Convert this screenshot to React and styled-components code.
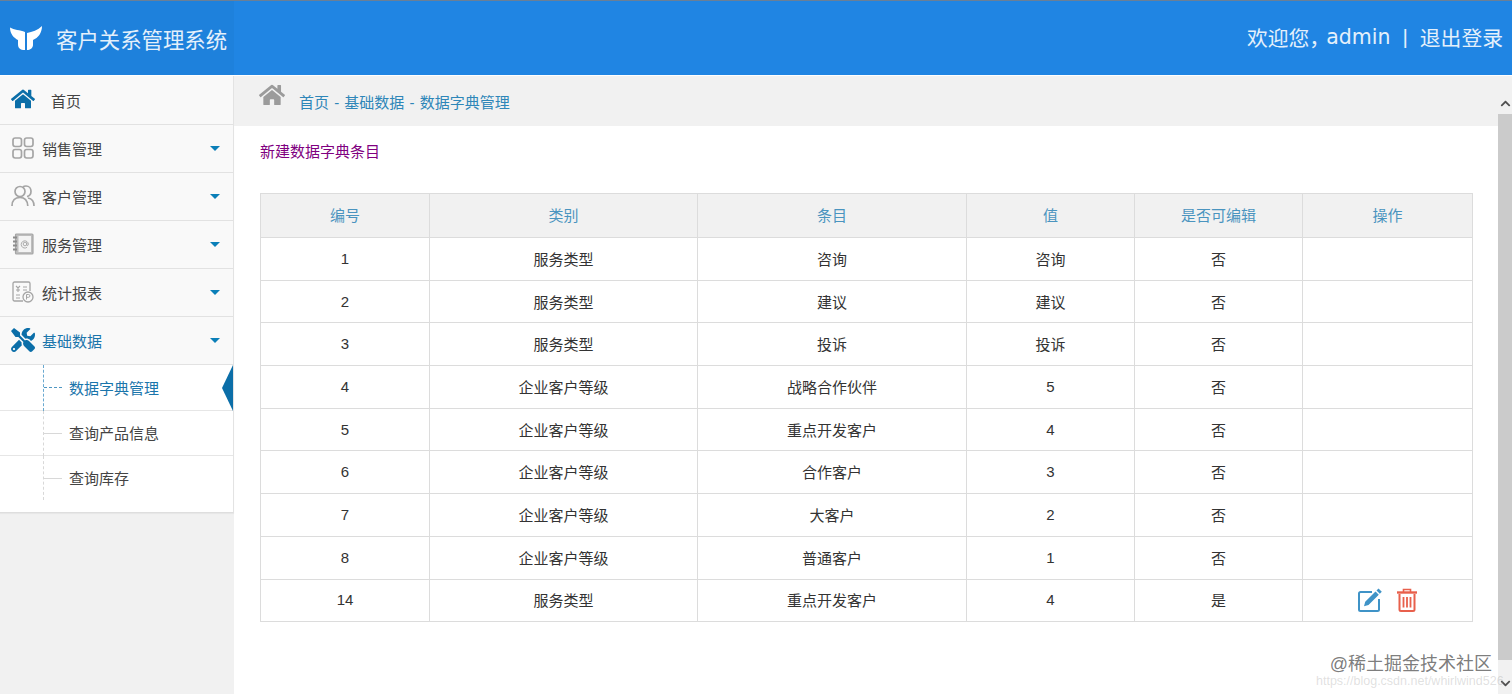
import React from 'react';
import styled, { createGlobalStyle } from 'styled-components';
import { FaHome, FaTools, FaChevronUp, FaChevronDown } from 'react-icons/fa';

const GlobalStyle = createGlobalStyle`
  html, body {
    margin: 0;
    padding: 0;
    height: 100%;
    overflow: hidden;
    font-family: "Liberation Sans", "Noto Sans CJK SC", sans-serif;
    font-size: 15px;
    color: #333;
  }
`;

const Page = styled.div`
  position: relative;
  width: 1512px;
  height: 694px;
  overflow: hidden;
  background: #fff;
  display: flex;
  flex-direction: column;
`;

const Header = styled.header`
  height: 74px;
  flex: none;
  display: flex;
  align-items: center;
  justify-content: space-between;
  background: #2085e3;
  border-top: 1px solid #6a7f96;
  color: #e4f0fb;
`;

const Brand = styled.div`
  width: 234px;
  height: 100%;
  display: flex;
  align-items: center;
  gap: 14px;
  padding: 0 0 0 10px;
  box-sizing: border-box;
  background: #1e81dc;
  font-size: 21.4px;
  white-space: nowrap;
`;

const UserBar = styled.div`
  display: flex;
  align-items: center;
  padding: 0 9px 2px 0;
  font-size: 20.8px;
`;

const UserName = styled.span`
  font-family: "DejaVu Sans", sans-serif;
  font-size: 20.5px;
  margin: 0 12px 0 -4px;
`;

const Divider = styled.span`
  margin-right: 12px;
`;

const Body = styled.div`
  flex: 1;
  min-height: 0;
  margin-top: 1px;
  display: flex;
`;

const Sidebar = styled.aside`
  width: 234px;
  flex: none;
  background: #f1f1f1;
`;

const MenuList = styled.div`
  background: #fff;
  border-right: 1px solid #e3e3e3;
  border-bottom: 1px solid #dedede;
  box-shadow: 0 1px 1px rgba(0, 0, 0, 0.04);
`;

const MenuRow = styled.div`
  height: ${({ $home }) => ($home ? '49px' : '48px')};
  box-sizing: border-box;
  display: flex;
  align-items: center;
  background: #f9f9f9;
  border-bottom: 1px solid #e2e2e2;
  padding: 0 13px 0 11px;
  color: ${({ $active }) => ($active ? '#1a75ab' : '#444')};
`;

const MenuIcon = styled.span`
  width: 24px;
  height: 24px;
  flex: none;
  display: flex;
  align-items: center;
  justify-content: center;
  margin: 0 ${({ $home }) => ($home ? '16px' : '7px')} 2px 0;
  color: ${({ $active }) => ($active ? '#0b6ea8' : '#a5a5a5')};
`;

const MenuLabel = styled.span`
  flex: 1;
`;

const Caret = styled.span`
  width: 0;
  height: 0;
  border-left: 5.5px solid transparent;
  border-right: 5.5px solid transparent;
  border-top: 5px solid #0b7fb8;
`;

const SubRow = styled.div`
  position: relative;
  height: ${({ $height }) => $height}px;
  box-sizing: border-box;
  padding: 0 0 ${({ $lift }) => $lift}px 69px;
  display: flex;
  align-items: center;
  background: #fff;
  border-bottom: ${({ $last }) => ($last ? 'none' : '1px solid #e6e6e6')};
  color: ${({ $active }) => ($active ? '#1a75ab' : '#444')};

  &::before {
    content: '';
    position: absolute;
    left: 43px;
    top: 0;
    bottom: ${({ $last }) => ($last ? '12px' : '-1px')};
    border-left: 1px dashed ${({ $active }) => ($active ? '#6aa9d0' : '#d8d8d8')};
  }

  &::after {
    content: '';
    position: absolute;
    left: 44px;
    top: 22px;
    width: 18px;
    border-top: 1px ${({ $active }) => ($active ? 'dashed #4f97c3' : 'solid #d8d8d8')};
  }
`;

const ActiveMark = styled.span`
  position: absolute;
  right: 0;
  top: 0;
  width: 0;
  height: 0;
  border-top: 23px solid transparent;
  border-bottom: 23px solid transparent;
  border-right: 11px solid #0b6ea8;
`;

const Main = styled.main`
  position: relative;
  flex: 1;
  min-width: 0;
  display: flex;
  flex-direction: column;
`;

const Breadcrumb = styled.div`
  height: 50px;
  flex: none;
  box-sizing: border-box;
  background: #f1f1f1;
  display: flex;
  align-items: center;
  padding: 0 0 0 25px;
  word-spacing: 1px;
  color: #2e86b8;
`;

const CrumbIcon = styled.span`
  display: flex;
  color: #9b9b9b;
  margin: -13px 14px 0 0;
`;

const Content = styled.div`
  flex: 1;
  padding: 15px 39px 0 26px;
`;

const NewLink = styled.a`
  display: block;
  height: 52px;
  font-size: 15px;
  line-height: 22px;
  color: #800080;
`;

const DataTable = styled.table`
  width: 1212px;
  table-layout: fixed;
  border-collapse: collapse;
  font-size: 15px;
  color: #333;
`;

const HeadCell = styled.th`
  height: 44px;
  padding: 0 0 2px;
  box-sizing: border-box;
  font-weight: 400;
  color: #4a94bf;
  background: #f1f1f1;
  border: 1px solid #dcdcdc;
`;

const Cell = styled.td`
  height: 42.7px;
  padding: 0 0 1px;
  box-sizing: border-box;
  text-align: center;
  border: 1px solid #dcdcdc;
`;

const Actions = styled.div`
  display: flex;
  justify-content: center;
  gap: 15px;
`;

const Scrollbar = styled.div`
  position: absolute;
  right: 0;
  top: 16px;
  bottom: 0;
  width: 14px;
  display: flex;
  flex-direction: column;
  align-items: center;
  background: #f1f1f1;
  color: #505050;
`;

const ScrollArrow = styled.span`
  height: 22px;
  flex: none;
  display: flex;
  align-items: center;
  font-size: 11px;
`;

const ScrollThumb = styled.div`
  width: 100%;
  height: 546px;
  background: #cbcbcb;
`;

const ScrollTrack = styled.div`
  flex: 1;
`;

const Watermark = styled.div`
  position: absolute;
  right: 20px;
  bottom: 19px;
  font-size: 18px;
  line-height: 22px;
  color: rgba(90, 90, 90, 0.8);
  white-space: nowrap;
`;

const WatermarkUrl = styled.div`
  position: absolute;
  left: 1316px;
  bottom: 5px;
  font-size: 12.5px;
  line-height: 16px;
  color: rgba(150, 150, 150, 0.3);
  white-space: nowrap;
`;

function Logo() {
  return (
    <svg width="32" height="24" viewBox="0 0 32 24" fill="#fff">
      <path d="M0 1.5 C4 4 10 4 15 6 V24 C10 24 8 22 8 18 V14 C4 12 0 8 0 1.5Z" />
      <path d="M32 0 C32 7 28 12 23 14 V19 C23 22 20 24 17 24 V7 C22 6 28 4 32 0Z" />
    </svg>
  );
}

function GridIcon() {
  return (
    <svg width="22" height="22" viewBox="0 0 22 22" fill="none" stroke="currentColor" strokeWidth="1.7">
      <rect x="1" y="1" width="8.5" height="8.5" rx="2.2" />
      <rect x="12.5" y="1" width="8.5" height="8.5" rx="2.2" />
      <rect x="1" y="12.5" width="8.5" height="8.5" rx="2.2" />
      <rect x="12.5" y="12.5" width="8.5" height="8.5" rx="2.2" />
    </svg>
  );
}

function UsersIcon() {
  return (
    <svg width="24" height="22" viewBox="0 0 24 22" fill="none" stroke="currentColor" strokeWidth="1.7">
      <circle cx="9" cy="6.5" r="5" />
      <path d="M12 1.8 C13 1 14 1 15 1 C18 1 20 3.4 20 6.3 C20 9 18.5 11 16 11.6" />
      <path d="M1 21 C1 15.5 4 12.5 9 12.5 C13.5 12.5 16.5 15.5 16.8 21" />
      <path d="M17 13 C20.5 13.6 23 16.5 23 21" />
    </svg>
  );
}

function ContactsIcon() {
  return (
    <svg width="22" height="22" viewBox="0 0 22 22" fill="none" stroke="currentColor">
      <rect x="3.5" y="1" width="17.5" height="20" rx="1" fill="#bdbdbd" strokeWidth="1.2" />
      <rect x="6.5" y="3" width="12.5" height="16" fill="#f3f3f3" stroke="none" />
      <path d="M1 4.5h4M1 8.5h4M1 12.5h4M1 16.5h4" strokeWidth="1.8" stroke="#8c8c8c" />
      <circle cx="13" cy="11" r="1.8" strokeWidth="0.9" />
      <path d="M14.8 9.5v2.4c0 1 1.6 1 1.6-.6a3.6 3.6 0 1 0-1.4 3" strokeWidth="0.9" />
    </svg>
  );
}

function ReportIcon() {
  return (
    <svg width="22" height="22" viewBox="0 0 22 22" fill="none" stroke="currentColor">
      <path d="M11 20H2.5A1.5 1.5 0 0 1 1 18.5V2.5A1.5 1.5 0 0 1 2.5 1h14A1.5 1.5 0 0 1 18 2.5V10" strokeWidth="1.3" />
      <path d="M4 5l2 2 2-2M6 7v4M4 9h4M11 6h4M11 9h4M4 14h4M4 17h4" strokeWidth="1.1" />
      <circle cx="16" cy="16" r="5" strokeWidth="1.3" />
      <path d="M14.5 18.5v-5h2a1.3 1.3 0 0 1 0 2.8h-2" strokeWidth="1" />
    </svg>
  );
}

function EditIcon() {
  return (
    <svg width="24" height="24" viewBox="0 0 24 24" fill="none">
      <path d="M14 4H2.5A1.5 1.5 0 0 0 1 5.5v16A1.5 1.5 0 0 0 2.5 23h17a1.5 1.5 0 0 0 1.5-1.5V11" stroke="#3f93c7" strokeWidth="2" />
      <path d="M20.5 0.5 L23.8 3.8 L21.8 5.8 L18.5 2.5Z M17.5 3.5 L20.8 6.8 L10.5 17 L6 18.2 L7.2 13.7Z" fill="#3f93c7" />
    </svg>
  );
}

function TrashIcon() {
  return (
    <svg width="20" height="24" viewBox="0 0 20 24" fill="none" stroke="#e8604c">
      <path d="M6.5 4V1.5h7V4" strokeWidth="1.6" />
      <path d="M0 4.5h20" strokeWidth="2.4" />
      <path d="M2.5 6v15.5A1.5 1.5 0 0 0 4 23h12a1.5 1.5 0 0 0 1.5-1.5V6" strokeWidth="2" />
      <path d="M6.5 9v10.5M10 9v10.5M13.5 9v10.5" strokeWidth="1.8" />
    </svg>
  );
}

const menus = [
  { label: '销售管理', icon: <GridIcon /> },
  { label: '客户管理', icon: <UsersIcon /> },
  { label: '服务管理', icon: <ContactsIcon /> },
  { label: '统计报表', icon: <ReportIcon /> },
  { label: '基础数据', icon: <FaTools size={24} />, active: true },
];

const subMenus = [
  { label: '数据字典管理', height: 46, lift: 1, active: true },
  { label: '查询产品信息', height: 45, lift: 2 },
  { label: '查询库存', height: 56, lift: 13, last: true },
];

const columns = [
  { label: '编号', width: 169 },
  { label: '类别', width: 268 },
  { label: '条目', width: 269 },
  { label: '值', width: 168 },
  { label: '是否可编辑', width: 168 },
  { label: '操作', width: 170 },
];

const rows = [
  [1, '服务类型', '咨询', '咨询', '否'],
  [2, '服务类型', '建议', '建议', '否'],
  [3, '服务类型', '投诉', '投诉', '否'],
  [4, '企业客户等级', '战略合作伙伴', 5, '否'],
  [5, '企业客户等级', '重点开发客户', 4, '否'],
  [6, '企业客户等级', '合作客户', 3, '否'],
  [7, '企业客户等级', '大客户', 2, '否'],
  [8, '企业客户等级', '普通客户', 1, '否'],
  [14, '服务类型', '重点开发客户', 4, '是'],
];

export default function App() {
  return (
    <Page>
      <GlobalStyle />
      <Header>
        <Brand>
          <Logo />
          客户关系管理系统
        </Brand>
        <UserBar>
          <span>欢迎您，</span>
          <UserName>admin</UserName>
          <Divider>|</Divider>
          <span>退出登录</span>
        </UserBar>
      </Header>
      <Body>
        <Sidebar>
          <MenuList>
            <MenuRow $home>
              <MenuIcon $home $active>
                <FaHome size={26} />
              </MenuIcon>
              <MenuLabel>首页</MenuLabel>
            </MenuRow>
            {menus.map(({ label, icon, active }) => (
              <MenuRow key={label} $active={active}>
                <MenuIcon $active={active}>{icon}</MenuIcon>
                <MenuLabel>{label}</MenuLabel>
                <Caret />
              </MenuRow>
            ))}
            {subMenus.map(({ label, height, lift, active, last }) => (
              <SubRow key={label} $height={height} $lift={lift} $active={active} $last={last}>
                {label}
                {active && <ActiveMark />}
              </SubRow>
            ))}
          </MenuList>
        </Sidebar>
        <Main>
          <Breadcrumb>
            <CrumbIcon>
              <FaHome size={26} />
            </CrumbIcon>
            首页 - 基础数据 - 数据字典管理
          </Breadcrumb>
          <Content>
            <NewLink>新建数据字典条目</NewLink>
            <DataTable>
              <colgroup>
                {columns.map(({ label, width }) => (
                  <col key={label} width={width} />
                ))}
              </colgroup>
              <thead>
                <tr>
                  {columns.map(({ label }) => (
                    <HeadCell key={label}>{label}</HeadCell>
                  ))}
                </tr>
              </thead>
              <tbody>
                {rows.map((row) => (
                  <tr key={row[0]}>
                    {row.map((value, i) => (
                      <Cell key={i}>{value}</Cell>
                    ))}
                    <Cell>
                      {row[4] === '是' && (
                        <Actions>
                          <EditIcon />
                          <TrashIcon />
                        </Actions>
                      )}
                    </Cell>
                  </tr>
                ))}
              </tbody>
            </DataTable>
          </Content>
          <Scrollbar>
            <ScrollArrow>
              <FaChevronUp />
            </ScrollArrow>
            <ScrollThumb />
            <ScrollTrack />
            <ScrollArrow>
              <FaChevronDown />
            </ScrollArrow>
          </Scrollbar>
        </Main>
      </Body>
      <WatermarkUrl>https://blog.csdn.net/whirlwind526</WatermarkUrl>
      <Watermark>@稀土掘金技术社区</Watermark>
    </Page>
  );
}
